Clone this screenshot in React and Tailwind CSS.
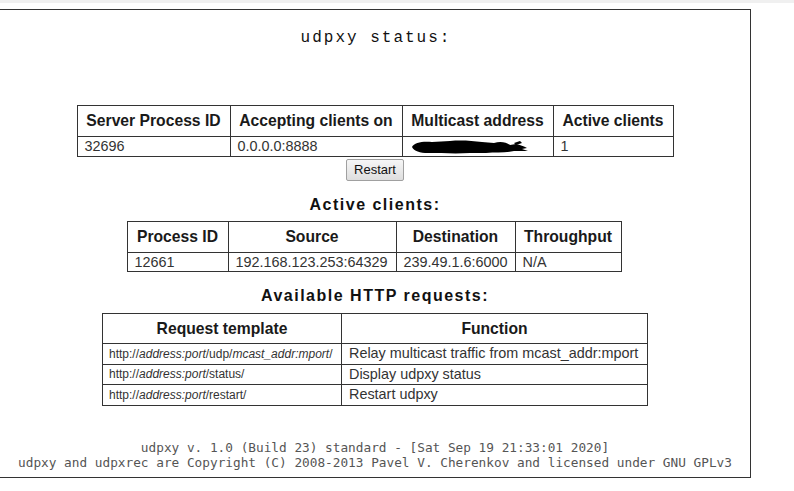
import React from 'react';

const th = 'border border-[#333] font-bold text-[15.7px] text-[#1a1a1a] text-center px-[8px]';
const td = 'border border-[#333] text-[14.4px] text-[#333] text-left px-[7px] leading-[17px] whitespace-nowrap';
const tdSmall = 'border border-[#333] text-[12px] text-[#333] px-[6px] leading-[14px] whitespace-nowrap';

const Redacted = () => (
  <svg width="120" height="16" viewBox="0 0 120 16" className="block">
    <path
      d="M2 8 C4 3 14 2 22 3 L40 2 C52 1 62 2 72 3 L84 4 C90 2 96 3 100 6 L106 5 C110 6 114 7 117 9 L112 10 L118 12 L104 12 C96 14 86 13 76 14 L60 14 C46 15 30 14 18 14 C10 14 4 12 2 8 Z"
      fill="#000"
    />
    <path d="M104 4 L110 2 L112 4 L106 6 Z" fill="#000" />
  </svg>
);

const Italic = ({ children }) => <i>{children}</i>;

const App = () => {
  return (
    <div className="w-[794px] h-[491px] bg-white overflow-hidden" style={{ fontFamily: '"Liberation Sans", Arial, sans-serif' }}>
      <div className="h-[3px] bg-[#f0f0f0]" />
      <div className="pt-[6px]">
        <div className="ml-[-1px] w-[752px] h-[469px] border border-[#333] bg-white flex flex-col items-center">
          {/* Title */}
          <h1
            className="mt-[18px] text-[16px] leading-[20px] tracking-[2px] text-[#111] font-normal pl-[2px]"
            style={{ fontFamily: '"Liberation Mono", "Courier New", monospace' }}
          >
            udpxy status:
          </h1>

          {/* Server table */}
          <table className="mt-[57px] border-collapse table-fixed w-[596px]">
            <colgroup>
              <col className="w-[153px]" />
              <col className="w-[172px]" />
              <col className="w-[151px]" />
              <col className="w-[120px]" />
            </colgroup>
            <thead>
              <tr className="h-[31px]">
                <th className={th}>Server Process ID</th>
                <th className={th}>Accepting clients on</th>
                <th className={th}>Multicast address</th>
                <th className={th}>Active clients</th>
              </tr>
            </thead>
            <tbody>
              <tr className="h-[20px]">
                <td className={td}>32696</td>
                <td className={td}>0.0.0.0:8888</td>
                <td className={td}>
                  <Redacted />
                </td>
                <td className={td}>1</td>
              </tr>
            </tbody>
          </table>

          <button className="mt-[2px] h-[22px] px-[7px] text-[13px] text-[#111] border border-[#a0a0a0] rounded-[2px] bg-gradient-to-b from-[#f6f6f6] to-[#dedede]">
            Restart
          </button>

          {/* Active clients */}
          <h2 className="mt-[14px] text-[16px] leading-[20px] font-bold tracking-[1.5px] text-[#111]">Active clients:</h2>
          <table className="mt-[6px] border-collapse table-fixed w-[494px] ml-[-2px]">
            <colgroup>
              <col className="w-[101px]" />
              <col className="w-[168px]" />
              <col className="w-[119px]" />
              <col className="w-[106px]" />
            </colgroup>
            <thead>
              <tr className="h-[31px]">
                <th className={th}>Process ID</th>
                <th className={th}>Source</th>
                <th className={th}>Destination</th>
                <th className={th}>Throughput</th>
              </tr>
            </thead>
            <tbody>
              <tr className="h-[19px]">
                <td className={td}>12661</td>
                <td className={td}>192.168.123.253:64329</td>
                <td className={td}>239.49.1.6:6000</td>
                <td className={td}>N/A</td>
              </tr>
            </tbody>
          </table>

          {/* HTTP requests */}
          <h2 className="mt-[14px] text-[16px] leading-[20px] font-bold tracking-[1.5px] text-[#111]">Available HTTP requests:</h2>
          <table className="mt-[7px] border-collapse table-fixed w-[545px]">
            <colgroup>
              <col className="w-[239px]" />
              <col className="w-[306px]" />
            </colgroup>
            <thead>
              <tr className="h-[30px]">
                <th className={th}>Request template</th>
                <th className={th}>Function</th>
              </tr>
            </thead>
            <tbody>
              <tr className="h-[20.5px]">
                <td className={tdSmall}>
                  http://<Italic>address:port</Italic>/udp/<Italic>mcast_addr:mport</Italic>/
                </td>
                <td className={td}>Relay multicast traffic from mcast_addr:mport</td>
              </tr>
              <tr className="h-[20.5px]">
                <td className={tdSmall}>
                  http://<Italic>address:port</Italic>/status/
                </td>
                <td className={td}>Display udpxy status</td>
              </tr>
              <tr className="h-[20.5px]">
                <td className={tdSmall}>
                  http://<Italic>address:port</Italic>/restart/
                </td>
                <td className={td}>Restart udpxy</td>
              </tr>
            </tbody>
          </table>

          {/* Footer */}
          <div
            className="mt-auto pb-[7px] text-center text-[12.75px] text-[#555]"
            style={{ fontFamily: '"DejaVu Sans Mono", monospace' }}
          >
            <p className="leading-[15px]">udpxy v. 1.0 (Build 23) standard - [Sat Sep 19 21:33:01 2020]</p>
            <p className="leading-[15px]">udpxy and udpxrec are Copyright (C) 2008-2013 Pavel V. Cherenkov and licensed under GNU GPLv3</p>
          </div>
        </div>
      </div>
    </div>
  );
};

export default App;
